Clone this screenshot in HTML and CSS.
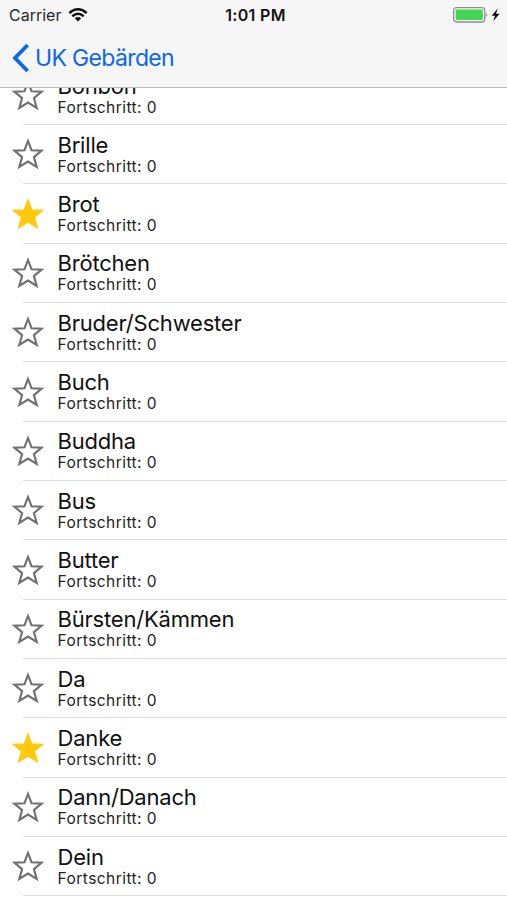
FILE: index.html
```html
<!DOCTYPE html>
<html lang="de">
<head>
<meta charset="utf-8">
<meta name="viewport" content="width=device-width, initial-scale=1">
<title>UK Gebärden</title>
<link rel="stylesheet" href="styles.css">
</head>
<body>
<svg width="0" height="0" class="defs" aria-hidden="true">
  <symbol id="star" viewBox="0 0 34 32"><path d="M17 3 L20.5 12.2 L30.6 12.6 L22.9 19.1 L25.7 29 L17 23.6 L8.3 29 L11.1 19.1 L3.4 12.6 L13.5 12.2 Z"/></symbol>
</svg>
<header class="header">
  <div class="status">
    <div class="network">
      <span class="carrier">Carrier</span>
      <svg class="wifi" width="20" height="14" viewBox="0 0 20 14"><g fill="none" stroke="#111" stroke-width="2.5"><path d="M1.3 5.1 Q10 -2.5 18.7 5.1"/><path d="M4.3 8.3 Q10 3.3 15.7 8.3"/></g><path d="M6.8 10.3 Q10 7.6 13.2 10.3 L10 13.6 Z" fill="#111"/></svg>
    </div>
    <span class="time">1:01 PM</span>
    <div class="power">
      <svg width="50" height="18" viewBox="0 0 50 18"><rect x="1.6" y="1.6" width="31.2" height="14.4" rx="3" fill="#f7f7f7" stroke="#8f8f92" stroke-width="1.3"/><rect x="3.6" y="3.6" width="27.2" height="10.4" rx="1" fill="#45d552"/><path d="M34.4 6.8 Q36.2 8.8 34.4 10.8 Z" fill="#77777a"/><path d="M45.8 2.4 L39.6 9.7 H43 L41.2 15.2 L47.6 7.7 H44 Z" fill="#111"/></svg>
    </div>
  </div>
  <nav class="nav">
    <svg width="18" height="30" viewBox="0 0 18 30"><path d="M15.6 2 L3 15 L15.6 28" fill="none" stroke="#0b66f6" stroke-width="3.8"/></svg>
    <span class="back">UK Gebärden</span>
  </nav>
</header>
<main class="viewport">
  <ul class="list">
    <li class="row"><svg class="star"><use href="#star"/></svg><div class="text"><span class="name">Bonbon</span><span class="progress">Fortschritt: 0</span></div></li>
    <li class="row"><svg class="star"><use href="#star"/></svg><div class="text"><span class="name">Brille</span><span class="progress">Fortschritt: 0</span></div></li>
    <li class="row"><svg class="star filled"><use href="#star"/></svg><div class="text"><span class="name">Brot</span><span class="progress">Fortschritt: 0</span></div></li>
    <li class="row"><svg class="star"><use href="#star"/></svg><div class="text"><span class="name">Brötchen</span><span class="progress">Fortschritt: 0</span></div></li>
    <li class="row"><svg class="star"><use href="#star"/></svg><div class="text"><span class="name">Bruder/Schwester</span><span class="progress">Fortschritt: 0</span></div></li>
    <li class="row"><svg class="star"><use href="#star"/></svg><div class="text"><span class="name">Buch</span><span class="progress">Fortschritt: 0</span></div></li>
    <li class="row"><svg class="star"><use href="#star"/></svg><div class="text"><span class="name">Buddha</span><span class="progress">Fortschritt: 0</span></div></li>
    <li class="row"><svg class="star"><use href="#star"/></svg><div class="text"><span class="name">Bus</span><span class="progress">Fortschritt: 0</span></div></li>
    <li class="row"><svg class="star"><use href="#star"/></svg><div class="text"><span class="name">Butter</span><span class="progress">Fortschritt: 0</span></div></li>
    <li class="row"><svg class="star"><use href="#star"/></svg><div class="text"><span class="name">Bürsten/Kämmen</span><span class="progress">Fortschritt: 0</span></div></li>
    <li class="row"><svg class="star"><use href="#star"/></svg><div class="text"><span class="name">Da</span><span class="progress">Fortschritt: 0</span></div></li>
    <li class="row"><svg class="star filled"><use href="#star"/></svg><div class="text"><span class="name">Danke</span><span class="progress">Fortschritt: 0</span></div></li>
    <li class="row"><svg class="star"><use href="#star"/></svg><div class="text"><span class="name">Dann/Danach</span><span class="progress">Fortschritt: 0</span></div></li>
    <li class="row"><svg class="star"><use href="#star"/></svg><div class="text"><span class="name">Dein</span><span class="progress">Fortschritt: 0</span></div></li>
  </ul>
</main>
</body>
</html>
```
FILE: styles.css
```css
* { box-sizing: border-box; }
body {
  margin: 0;
  height: 900px;
  overflow: hidden;
  display: flex;
  flex-direction: column;
  background: #fff;
  color: #111;
  font-family: Inter, "Liberation Sans", sans-serif;
}
.defs { display: none; }
.header {
  flex: none;
  height: 88px;
  background: #f6f6f6;
  border-bottom: 1px solid #bcbcbc;
}
.status {
  display: grid;
  grid-template-columns: 1fr auto 1fr;
  align-items: center;
  height: 30px;
  padding: 0 5px 0 9px;
  font-size: 16px;
  line-height: 30px;
}
.network { display: flex; align-items: center; gap: 7px; }
.carrier { color: #2a2a2a; }
.wifi { display: block; }
.time { font-weight: 600; letter-spacing: 0.3px; }
.power { display: flex; justify-content: flex-end; }
.nav {
  display: flex;
  align-items: center;
  gap: 5px;
  height: 56px;
  padding-left: 12px;
  color: #0b66f6;
}
.back { font-size: 23px; line-height: 28px; letter-spacing: -0.65px; }
.viewport { flex: 1; min-height: 0; overflow: hidden; }
.list { list-style: none; margin: -22px 0 0; padding: 0; }
.row {
  display: flex;
  align-items: flex-start;
  height: 59.32px;
  padding: 12.5px 0 0 11px;
  background: linear-gradient(#dcdcdc, #dcdcdc) 23px 100% / 100% 1.2px no-repeat;
}
.star {
  flex: none;
  width: 34px;
  height: 32px;
  margin: 0.6px 12.5px 0 0;
  fill: none;
  stroke: #707070;
  stroke-width: 2.1;
}
.star.filled { fill: #ffc90e; stroke: #ffc90e; }
.text { display: flex; flex-direction: column; margin-top: -6px; }
.name { font-size: 22px; line-height: 26px; letter-spacing: -0.2px; }
.progress { font-size: 15.5px; line-height: 18px; letter-spacing: 0.45px; color: #222; }
```
